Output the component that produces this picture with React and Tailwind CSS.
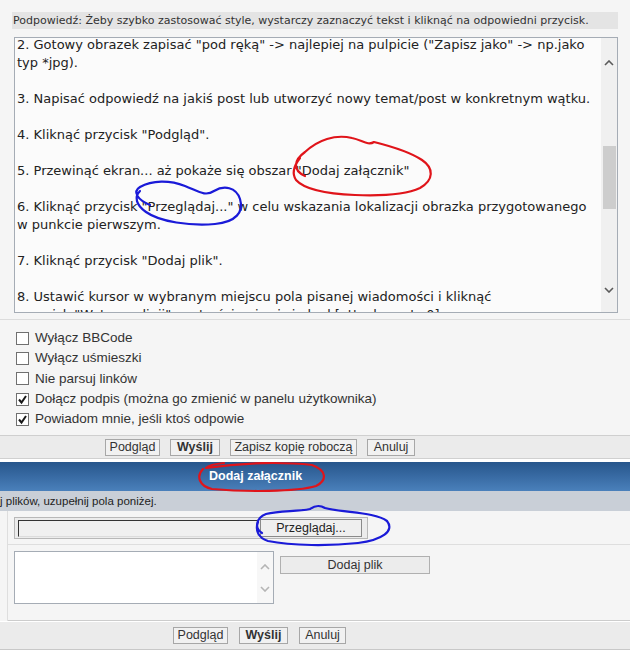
import React from "react";

const lines = [
  '2. Gotowy obrazek zapisać "pod ręką" -> najlepiej na pulpicie ("Zapisz jako" -> np.jako',
  "typ *jpg).",
  "",
  "3. Napisać odpowiedź na jakiś post lub utworzyć nowy temat/post w konkretnym wątku.",
  "",
  '4. Kliknąć przycisk "Podgląd".',
  "",
  '5. Przewinąć ekran... aż pokaże się obszar "Dodaj załącznik"',
  "",
  '6. Kliknąć przycisk "Przeglądaj..." w celu wskazania lokalizacji obrazka przygotowanego',
  "w punkcie pierwszym.",
  "",
  '7. Kliknąć przycisk "Dodaj plik".',
  "",
  "8. Ustawić kursor w wybranym miejscu pola pisanej wiadomości i kliknąć",
  'przycisk "Wstaw w linii" - w treści pojawi się kod [attachment=0]',
];

const options = [
  { label: "Wyłącz BBCode", checked: false },
  { label: "Wyłącz uśmieszki", checked: false },
  { label: "Nie parsuj linków", checked: false },
  { label: "Dołącz podpis (można go zmienić w panelu użytkownika)", checked: true },
  { label: "Powiadom mnie, jeśli ktoś odpowie", checked: true },
];

function Chevron({ up, color = "#5a5a5a" }) {
  return (
    <svg width="10" height="6" viewBox="0 0 10 6">
      <path
        d={up ? "M1 5 L5 1 L9 5" : "M1 1 L5 5 L9 1"}
        fill="none"
        stroke={color}
        strokeWidth="1.6"
      />
    </svg>
  );
}

function Checkbox({ checked }) {
  return (
    <div className="w-[13px] h-[13px] border border-[#707070] bg-white flex items-center justify-center">
      {checked && (
        <svg width="11" height="11" viewBox="0 0 11 11">
          <path d="M2 5.5 L4.5 8.5 L9 2" fill="none" stroke="#1a1a1a" strokeWidth="2" />
        </svg>
      )}
    </div>
  );
}

function Btn({ children, w, bold }) {
  return (
    <div
      className={`${w} h-[17px] border border-[#a7a7a7] bg-[#f1f1f1] text-[12.5px] leading-[15px] text-center text-[#333] ${
        bold ? "font-bold" : ""
      }`}
    >
      {children}
    </div>
  );
}

export default function App() {
  return (
    <div className="relative w-[630px] h-[662px] overflow-hidden bg-[#f5f5f5] flex flex-col font-['Liberation_Sans',Arial,sans-serif]">
      <div className="h-[12px]" />

      {/* hint bar */}
      <div className="ml-[12px] w-[606px] h-[17px] bg-[#e4e4e4] font-['DejaVu_Sans',sans-serif] text-[11px] leading-[17px] text-[#333] pl-[1px] whitespace-nowrap">
        Podpowiedź: Żeby szybko zastosować style, wystarczy zaznaczyć tekst i kliknąć na odpowiedni przycisk.
      </div>

      {/* message textarea */}
      <div className="mt-[8px] ml-[14px] w-[604px] h-[276px] border border-[#a5acb5] bg-[#fbfbfb] flex">
        <div className="flex-1 overflow-hidden pl-[2px] font-['DejaVu_Sans',sans-serif] text-[13px] leading-[18px] text-[#222]">
          <div className="-mt-[2px]">
            {lines.map((l, i) => (
              <div key={i} className="h-[18px] whitespace-nowrap">
                {l}
              </div>
            ))}
          </div>
        </div>
        <div className="w-[16px] bg-[#f0f0f0] flex flex-col items-center">
          <div className="h-[22px]" />
          <Chevron up />
          <div className="h-[80px]" />
          <div className="w-[13px] h-[63px] bg-[#cdcdcd]" />
          <div className="h-[78px]" />
          <Chevron />
        </div>
      </div>

      <div className="mt-[6px] h-px bg-[#dcdcdc]" />

      {/* options */}
      <div className="pt-[8px] flex flex-col">
        {options.map((o) => (
          <div key={o.label} className="h-[20.3px] flex items-center pl-[16px] gap-[6px] text-[13.5px] text-[#333]">
            <Checkbox checked={o.checked} />
            <span>{o.label}</span>
          </div>
        ))}
      </div>

      <div className="mt-[6px] h-px bg-[#cfcfcf]" />
      <div className="h-[22px] bg-[#ebebeb] flex items-center pl-[105px] gap-[10px]">
        <Btn w="w-[55px]">Podgląd</Btn>
        <Btn w="w-[50px]" bold>
          Wyślij
        </Btn>
        <Btn w="w-[127px]">Zapisz kopię roboczą</Btn>
        <Btn w="w-[48px]">Anuluj</Btn>
      </div>
      <div className="h-px bg-[#d0d0d0]" />
      <div className="h-[3px] bg-white" />

      {/* attachment header */}
      <div className="h-[29px] bg-gradient-to-b from-[#27568c] to-[#4a80bb] text-white font-bold text-[12.5px] leading-[29px] pl-[209px]">
        Dodaj załącznik
      </div>
      <div className="h-[20px] bg-[#c9cfd7] text-[11.5px] leading-[20px] text-[#222] whitespace-nowrap">
        j plików, uzupełnij pola poniżej.
      </div>

      <div className="flex">
        <div className="w-[7px]" />
        <div className="flex-1 border-l border-[#dedede] flex flex-col">
          <div className="h-[34px] border-b border-[#dedede] pl-[6px] pt-[6px]">
            <div className="w-[354px] h-[22px] border border-[#b8b8b8] bg-[#ececec] flex items-center pl-[3px] gap-[2px]">
              <div className="w-[240px] h-[17px] border border-t-[#333] border-l-[#333] border-b-[#dcdcdc] border-r-[#dcdcdc] bg-[#f0f0f0]" />
              <div className="w-[102px] h-[18px] border border-[#8a8a8a] bg-[#efefef] text-[12.5px] leading-[16px] text-center text-[#222]">
                Przeglądaj...
              </div>
            </div>
          </div>
          <div className="h-[76px] border-b border-[#cccccc] pl-[6px] pt-[6px] flex items-start gap-[6px]">
            <div className="w-[260px] h-[53px] border border-[#a5acb5] bg-white flex justify-end">
              <div className="w-[16px] bg-[#f7f7f7] flex flex-col items-center pt-[12px] gap-[16px]">
                <Chevron up color="#b5b5b5" />
                <Chevron color="#b5b5b5" />
              </div>
            </div>
            <div className="mt-[5px] w-[150px] h-[18px] border border-[#b0b0b0] bg-[#ececec] text-[12.5px] leading-[16px] text-center text-[#333]">
              Dodaj plik
            </div>
          </div>
        </div>
      </div>

      <div className="h-px bg-white" />
      <div className="h-[27px] bg-[#ebebeb] flex items-center pl-[173px] gap-[11px]">
        <Btn w="w-[55px]">Podgląd</Btn>
        <Btn w="w-[49px]" bold>
          Wyślij
        </Btn>
        <Btn w="w-[47px]">Anuluj</Btn>
      </div>
      <div className="h-px bg-[#c8c8c8]" />
      <div className="flex-1 bg-white" />

      {/* hand-drawn annotations */}
      <svg className="absolute left-0 top-0 pointer-events-none" width="630" height="662" viewBox="0 0 630 662">
        <g fill="none" strokeLinecap="round" strokeLinejoin="round" strokeWidth="2.2">
          <path
            stroke="#e0141a"
            d="M305 176 C292 170 294 160 305 152 C318 140 335 134 352 138 C362 140 368 146 374 142 C390 146 410 152 422 160 C434 168 434 180 420 188 C405 195 380 196 355 195 C330 194 305 190 296 180 C292 174 293 167 300 158"
          />
          <path
            stroke="#1a1ad8"
            d="M150 205 C138 200 132 192 140 187 C152 180 170 180 185 186 C198 191 205 197 214 191 C224 185 236 187 240 199 C244 212 236 222 215 224 C190 226 160 222 146 212 C136 205 134 197 140 191"
          />
          <path
            stroke="#e0141a"
            d="M224 463 C214 464 208 466 206 468 C245 462 285 462 312 465 C326 470 328 480 316 486 C296 492 245 492 212 489 C199 486 196 476 203 469"
          />
          <path
            stroke="#1a1ad8"
            d="M262 533 C254 528 256 518 266 514 C280 510 296 512 310 509 C316 505 320 505 325 508 C345 513 375 512 387 521 C395 531 382 540 358 543 C330 546 292 546 268 541 C258 538 255 530 258 522"
          />
        </g>
      </svg>
    </div>
  );
}
